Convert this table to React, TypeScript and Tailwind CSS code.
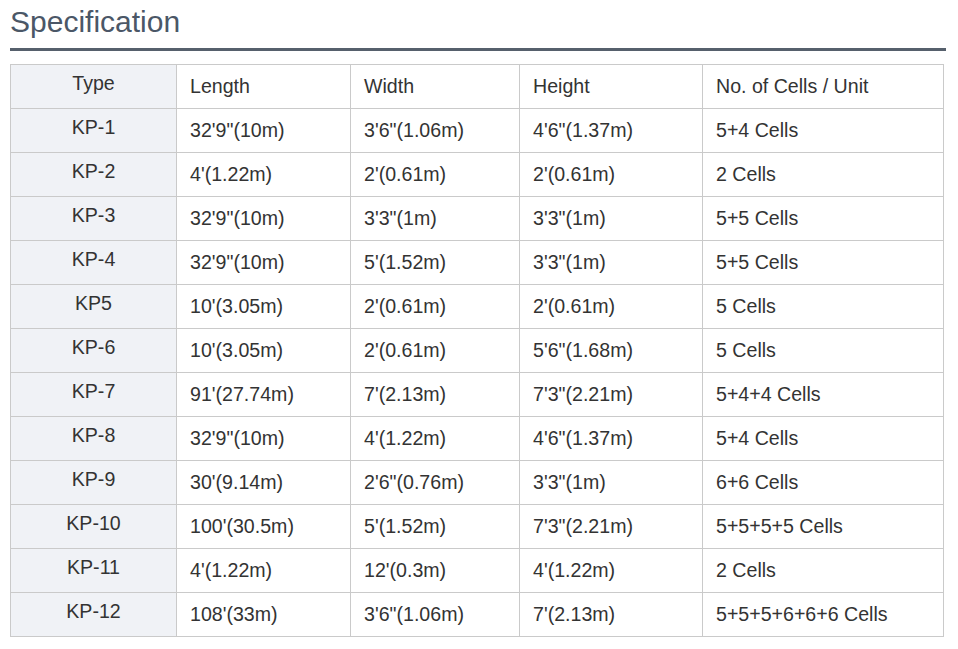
const rows: string[][] = [
  ["KP-1", "32'9\"(10m)", "3'6\"(1.06m)", "4'6\"(1.37m)", "5+4 Cells"],
  ["KP-2", "4'(1.22m)", "2'(0.61m)", "2'(0.61m)", "2 Cells"],
  ["KP-3", "32'9\"(10m)", "3'3\"(1m)", "3'3\"(1m)", "5+5 Cells"],
  ["KP-4", "32'9\"(10m)", "5'(1.52m)", "3'3\"(1m)", "5+5 Cells"],
  ["KP5", "10'(3.05m)", "2'(0.61m)", "2'(0.61m)", "5 Cells"],
  ["KP-6", "10'(3.05m)", "2'(0.61m)", "5'6\"(1.68m)", "5 Cells"],
  ["KP-7", "91'(27.74m)", "7'(2.13m)", "7'3\"(2.21m)", "5+4+4 Cells"],
  ["KP-8", "32'9\"(10m)", "4'(1.22m)", "4'6\"(1.37m)", "5+4 Cells"],
  ["KP-9", "30'(9.14m)", "2'6\"(0.76m)", "3'3\"(1m)", "6+6 Cells"],
  ["KP-10", "100'(30.5m)", "5'(1.52m)", "7'3\"(2.21m)", "5+5+5+5 Cells"],
  ["KP-11", "4'(1.22m)", "12'(0.3m)", "4'(1.22m)", "2 Cells"],
  ["KP-12", "108'(33m)", "3'6\"(1.06m)", "7'(2.13m)", "5+5+5+6+6+6 Cells"],
];

const headers = ["Type", "Length", "Width", "Height", "No. of Cells / Unit"];

function Row({ cells }: { cells: string[] }) {
  return (
    <tr className="h-[44px]">
      <td className="border border-[#cacaca] bg-[#f0f2f6] pb-[5px] text-center align-middle">
        {cells[0]}
      </td>
      {cells.slice(1).map((c, i) => (
        <td key={i} className="border border-[#cacaca] px-[13px] align-middle">
          {c}
        </td>
      ))}
    </tr>
  );
}

export default function App() {
  return (
    <div className="min-h-[649px] w-[958px] bg-white pl-[10px] pr-[12px] font-['Liberation_Sans',Arial,sans-serif]">
      <h2 className="pt-[3px] text-[30px] leading-[38px] text-[#4b5767]">Specification</h2>
      <div className="mt-[7px] h-[3px] w-[936px] bg-[#56606c]" />
      <table className="mt-[13px] w-[934px] table-fixed border-collapse text-[19.6px] text-[#333]">
        <colgroup>
          <col className="w-[166px]" />
          <col className="w-[174px]" />
          <col className="w-[169px]" />
          <col className="w-[183px]" />
          <col />
        </colgroup>
        <tbody>
          <Row cells={headers} />
          {rows.map((r) => (
            <Row key={r[0]} cells={r} />
          ))}
        </tbody>
      </table>
    </div>
  );
}
